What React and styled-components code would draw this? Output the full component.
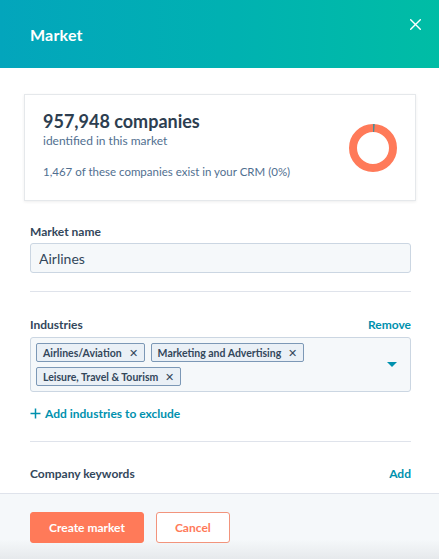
import React from "react";
import styled, { createGlobalStyle } from "styled-components";

const GlobalStyle = createGlobalStyle`
  *, *::before, *::after { box-sizing: border-box; }
  html, body {
    margin: 0;
    padding: 0;
    background: #fff;
    font-family: "Lato", "Open Sans", sans-serif;
    color: #33475b;
  }
`;

const Panel = styled.div`
  width: 439px;
  height: 559px;
  display: flex;
  flex-direction: column;
  overflow: hidden;
  background: #fff;
`;

const Header = styled.div`
  height: 68px;
  flex-shrink: 0;
  display: flex;
  align-items: center;
  padding: 0 18px 0 30px;
  background: linear-gradient(90deg, #03a5bc 0%, #00b1b2 50%, #00bda5 100%);
  color: #fff;
  position: relative;
`;

const Title = styled.h1`
  margin: 0;
  font-size: 16px;
  font-weight: 700;
  letter-spacing: 0.2px;
`;

const CloseButton = styled.button`
  position: absolute;
  top: 19px;
  right: 18px;
  width: 11px;
  height: 11px;
  padding: 0;
  border: 0;
  background: none;
  cursor: pointer;
  display: flex;
`;

const Body = styled.div`
  flex: 1;
  padding: 26px 28px 0 30px;
  display: flex;
  flex-direction: column;
  overflow: hidden;

  & > * {
    flex-shrink: 0;
  }
`;

const SummaryCard = styled.div`
  margin: 0 -5px 0 -6px;
  height: 107px;
  border: 1px solid #e5e8eb;
  box-shadow: 0 1px 3px rgba(0, 0, 0, 0.07);
  display: flex;
  align-items: center;
  justify-content: space-between;
  padding: 0 17px 0 18px;
`;

const SummaryText = styled.div`
  display: flex;
  flex-direction: column;
  padding-bottom: 7px;
`;

const Count = styled.div`
  font-size: 18px;
  font-weight: 700;
  color: #2d3e50;
  line-height: 22px;
`;

const Sub = styled.div`
  font-size: 12px;
  color: #516f90;
  line-height: 18px;
`;

const Note = styled.div`
  font-size: 11.5px;
  color: #516f90;
  margin-top: 15px;
`;

const Field = styled.div`
  display: flex;
  flex-direction: column;
  padding-top: ${(p) => p.$top || 0}px;
`;

const LabelRow = styled.div`
  display: flex;
  justify-content: space-between;
  align-items: center;
  margin-bottom: ${(p) => p.$gap ?? 5}px;
`;

const Label = styled.label`
  font-size: 12px;
  font-weight: 700;
  color: #33475b;
`;

const LinkButton = styled.button`
  border: 0;
  background: none;
  padding: 0;
  font-family: inherit;
  font-size: 12px;
  font-weight: 700;
  color: #0091ae;
  cursor: pointer;
  display: flex;
  align-items: center;
  gap: 4px;
`;

const ExcludeLink = styled(LinkButton)`
  margin-top: 14px;
  align-self: flex-start;
`;

const TextInput = styled.input`
  height: 30px;
  border: 1px solid #cbd6e2;
  border-radius: 3px;
  background: #f5f8fa;
  padding: 0 8px;
  font-family: inherit;
  font-size: 14px;
  color: #33475b;
  outline: none;
`;

const Divider = styled.hr`
  width: 100%;
  border: 0;
  border-top: 1px solid #dfe3eb;
  margin: ${(p) => p.$margin};
`;

const MultiSelect = styled.div`
  min-height: 55px;
  border: 1px solid #cbd6e2;
  border-radius: 3px;
  background: #f5f8fa;
  display: flex;
  align-items: center;
  padding: 5px 13px 5px 5px;
`;

const Tags = styled.div`
  flex: 1;
  display: flex;
  flex-wrap: wrap;
  gap: 5px 6px;
`;

const Tag = styled.span`
  display: inline-flex;
  align-items: center;
  gap: 7px;
  height: 19px;
  padding: 0 6px;
  border: 1px solid #7c98b6;
  border-radius: 2px;
  background: #eaf0f6;
  font-size: 10.5px;
  font-weight: 700;
  color: #33475b;
`;

const TagX = styled.span`
  font-size: 11px;
  font-weight: 400;
  line-height: 1;
`;

const Caret = styled.span`
  width: 0;
  height: 0;
  border-left: 5px solid transparent;
  border-right: 5px solid transparent;
  border-top: 5px solid #0091ae;
`;

const Footer = styled.div`
  height: 66px;
  flex-shrink: 0;
  border-top: 1px solid #dfe3eb;
  background: linear-gradient(180deg, #f5f8fa 70%, #e6e9ec 100%);
  display: flex;
  align-items: flex-start;
  gap: 12px;
  padding: 18px 30px 0;
`;

const Button = styled.button`
  height: 31px;
  padding: 0 18px;
  border-radius: 3px;
  border: 1px solid ${(p) => (p.$primary ? "#ff7a59" : "#f2947c")};
  background: ${(p) => (p.$primary ? "#ff7a59" : "#fff")};
  color: ${(p) => (p.$primary ? "#fff" : "#ff7a59")};
  font-family: inherit;
  font-size: 12px;
  font-weight: 700;
  cursor: pointer;
`;

const Donut = () => {
  const r = 20;
  const c = 2 * Math.PI * r;
  return (
    <svg width="50" height="50" viewBox="0 0 50 50">
      <circle cx="25" cy="25" r={r} fill="none" stroke="#ff7a59" strokeWidth="8" />
      <circle
        cx="25"
        cy="25"
        r={r}
        fill="none"
        stroke="#4a8c96"
        strokeWidth="8"
        strokeDasharray={`${c * 0.012} ${c}`}
        transform="rotate(-90 25 25)"
      />
    </svg>
  );
};

const industries = ["Airlines/Aviation", "Marketing and Advertising", "Leisure, Travel & Tourism"];

export default function App() {
  return (
    <>
      <GlobalStyle />
      <Panel>
        <Header>
          <Title>Market</Title>
          <CloseButton aria-label="Close">
            <svg width="11" height="11" viewBox="0 0 11 11">
              <path d="M0.7 0.7L10.3 10.3M10.3 0.7L0.7 10.3" stroke="#fff" strokeWidth="1.4" strokeLinecap="round" />
            </svg>
          </CloseButton>
        </Header>
        <Body>
          <SummaryCard>
            <SummaryText>
              <Count>957,948 companies</Count>
              <Sub>identified in this market</Sub>
              <Note>1,467 of these companies exist in your CRM (0%)</Note>
            </SummaryText>
            <Donut />
          </SummaryCard>

          <Field $top={23}>
            <LabelRow $gap={4}>
              <Label>Market name</Label>
            </LabelRow>
            <TextInput defaultValue="Airlines" />
          </Field>

          <Divider $margin="18px 0 25px" />

          <Field>
            <LabelRow>
              <Label>Industries</Label>
              <LinkButton>Remove</LinkButton>
            </LabelRow>
            <MultiSelect>
              <Tags>
                {industries.map((name) => (
                  <Tag key={name}>
                    {name}
                    <TagX>✕</TagX>
                  </Tag>
                ))}
              </Tags>
              <Caret />
            </MultiSelect>
          </Field>

          <ExcludeLink>
            <svg width="11" height="11" viewBox="0 0 11 11">
              <path d="M5.5 0.5V10.5M0.5 5.5H10.5" stroke="#0091ae" strokeWidth="1.5" />
            </svg>
            Add industries to exclude
          </ExcludeLink>

          <Divider $margin="20px 0 24px" />

          <Field>
            <LabelRow>
              <Label>Company keywords</Label>
              <LinkButton>Add</LinkButton>
            </LabelRow>
          </Field>
        </Body>
        <Footer>
          <Button $primary>Create market</Button>
          <Button>Cancel</Button>
        </Footer>
      </Panel>
    </>
  );
}
